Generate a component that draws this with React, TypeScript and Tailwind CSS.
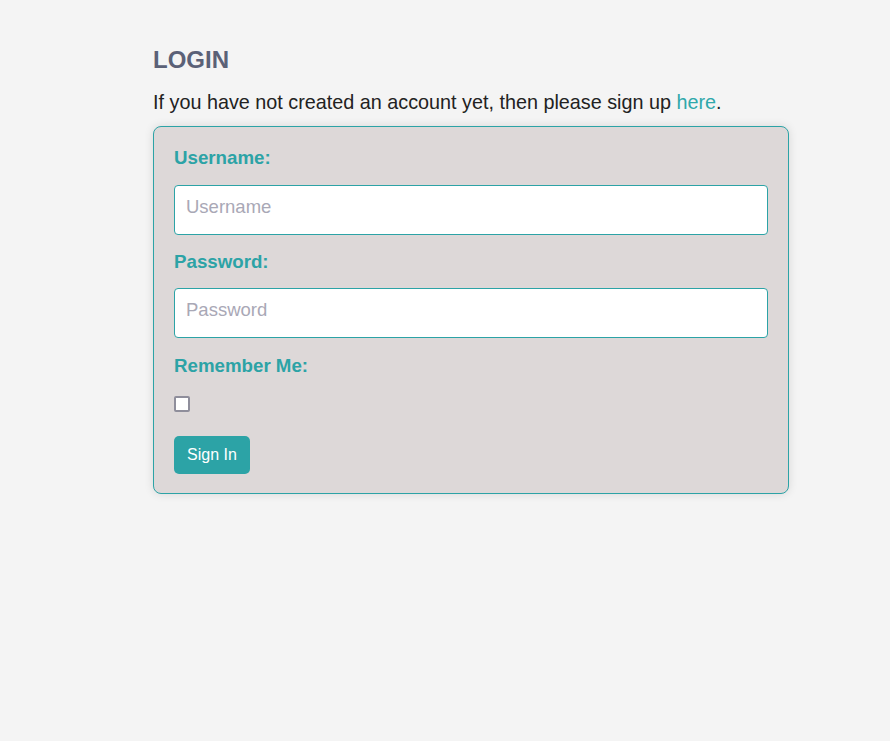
import React from "react";

export default function App() {
  return (
    <div
      className="min-h-[741px] w-full bg-[#f4f4f4] text-[#222222]"
      style={{ fontFamily: '"Liberation Sans", Arial, sans-serif' }}
    >
      <div className="ml-[153px] w-[636px] pt-[46px]">
        <h1 className="text-[24px] font-bold leading-[28px] text-[#5b6177]">LOGIN</h1>
        <p className="mt-[17px] text-[19.8px] leading-[23px]">
          If you have not created an account yet, then please sign up{" "}
          <a href="#" className="text-[#2fa8ab]">here</a>.
        </p>
        <form
          className="mt-[12px] flex flex-col items-start rounded-[8px] border border-[#2ca3a6] bg-[#ddd8d8] px-[20px] pt-[20px] pb-[19px] shadow-[0_0_10px_rgba(0,0,0,0.12)]"
          onSubmit={(e) => e.preventDefault()}
        >
          <label className="block text-[18.72px] font-bold leading-[22px] text-[#2ca3a6]">
            Username:
          </label>
          <input
            type="text"
            placeholder="Username"
            className="mt-[16px] h-[50px] w-full rounded-[4px] border border-[#2ca3a6] bg-white px-[11px] pb-[6px] text-[18.5px] text-[#222] placeholder:text-[#a9a8b6] outline-none"
          />
          <label className="mt-[16px] block text-[18.72px] font-bold leading-[22px] text-[#2ca3a6]">
            Password:
          </label>
          <input
            type="password"
            placeholder="Password"
            className="mt-[15px] h-[50px] w-full rounded-[4px] border border-[#2ca3a6] bg-white px-[11px] pb-[6px] text-[18.5px] text-[#222] placeholder:text-[#a9a8b6] outline-none"
          />
          <label className="mt-[17px] block text-[18.72px] font-bold leading-[22px] text-[#2ca3a6]">
            Remember Me:
          </label>
          <input
            type="checkbox"
            className="mt-[19px] h-[16px] w-[16px] appearance-none rounded-[2px] border-2 border-[#8f8e9b] bg-white"
          />
          <button
            type="submit"
            className="mt-[24px] h-[38px] rounded-[5px] bg-[#2ca3a6] px-[13px] text-[16px] text-white"
          >
            Sign In
          </button>
        </form>
      </div>
    </div>
  );
}
